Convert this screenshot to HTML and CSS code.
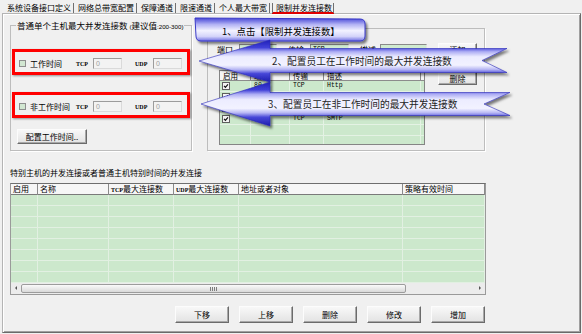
FILE: index.html
```html
<!DOCTYPE html>
<html lang="zh-CN">
<head>
    <meta charset="UTF-8">
    <meta name="viewport" content="width=device-width, initial-scale=1.0">
    <title>限制并发连接数</title>
    <link rel="stylesheet" href="styles.css">
</head>
<body>
    <div class="tabs">
        <span class="tab">系统设备接口定义</span>
        <span class="tab">网络总带宽配置</span>
        <span class="tab">保障通道</span>
        <span class="tab">限速通道</span>
        <span class="tab">个人最大带宽</span>
        <span class="tab active">限制并发连接数</span>
    </div>

    <div class="panel">
        <div class="top-row">
            <div class="group group-left">
                <div class="group-title">普通单个主机最大并发连接数 <span class="tiny">(</span>建议值<span class="tiny">:200-300)</span></div>

                <div class="limit-row mark">
                    <span class="check"></span>
                    <span class="limit-name">工作时间</span>
                    <span class="proto">TCP</span>
                    <span class="num-input">0</span>
                    <span class="proto udp">UDP</span>
                    <span class="num-input">0</span>
                </div>

                <div class="limit-row mark">
                    <span class="check"></span>
                    <span class="limit-name">非工作时间</span>
                    <span class="proto">TCP</span>
                    <span class="num-input">0</span>
                    <span class="proto udp">UDP</span>
                    <span class="num-input">0</span>
                </div>

                <button class="btn btn-config">配置工作时间..</button>
            </div>

            <div class="group group-right">
                <div class="port-fields">
                    <span class="field-label">端口</span>
                    <span class="field-input w-port"></span>
                    <span class="field-label gap">传输</span>
                    <span class="field-input w-proto">TCP</span>
                    <span class="field-label gap">描述</span>
                    <span class="field-input w-desc"></span>
                    <button class="btn btn-side">添加</button>
                </div>
                <div class="port-body">
                    <div class="port-grid">
                        <div class="pg-head">
                            <span>启用</span><span>端口</span><span>传输</span><span>描述</span><span></span>
                        </div>
                        <div class="pg-row">
                            <span><i class="tick"><svg viewBox="0 0 7 7"><path d="M1.2 3.4 L2.8 5 L5.8 1.6" /></svg></i></span><span>80</span><span>TCP</span><span>Http</span><span></span>
                        </div>
                        <div class="pg-row">
                            <span><i class="tick"><svg viewBox="0 0 7 7"><path d="M1.2 3.4 L2.8 5 L5.8 1.6" /></svg></i></span><span></span><span></span><span></span><span></span>
                        </div>
                        <div class="pg-row">
                            <span><i class="tick"><svg viewBox="0 0 7 7"><path d="M1.2 3.4 L2.8 5 L5.8 1.6" /></svg></i></span><span></span><span></span><span></span><span></span>
                        </div>
                        <div class="pg-row">
                            <span><i class="tick"><svg viewBox="0 0 7 7"><path d="M1.2 3.4 L2.8 5 L5.8 1.6" /></svg></i></span><span>25</span><span>TCP</span><span>SMTP</span><span></span>
                        </div>
                        <div class="pg-row"><span></span><span></span><span></span><span></span><span></span></div>
                        <div class="pg-row"><span></span><span></span><span></span><span></span><span></span></div>
                    </div>
                    <button class="btn btn-side btn-del">删除</button>
                </div>
            </div>
        </div>

        <div class="special-label">特别主机的并发连接或者普通主机特别时间的并发连接</div>

        <div class="list">
            <div class="host-head">
                <span>启用</span>
                <span>名称</span>
                <span><b class="latin">TCP</b>最大连接数</span>
                <span><b class="latin">UDP</b>最大连接数</span>
                <span>地址或者对象</span>
                <span>策略有效时间</span>
            </div>
            <div class="host-row"><span></span><span></span><span></span><span></span><span></span><span></span></div>
            <div class="host-row"><span></span><span></span><span></span><span></span><span></span><span></span></div>
            <div class="host-row"><span></span><span></span><span></span><span></span><span></span><span></span></div>
            <div class="host-row"><span></span><span></span><span></span><span></span><span></span><span></span></div>
            <div class="host-row"><span></span><span></span><span></span><span></span><span></span><span></span></div>
            <div class="host-row"><span></span><span></span><span></span><span></span><span></span><span></span></div>
            <div class="host-row"><span></span><span></span><span></span><span></span><span></span><span></span></div>
            <div class="host-row"><span></span><span></span><span></span><span></span><span></span><span></span></div>
            <div class="hscroll">
                <span class="sb-arrow left"></span>
                <span class="sb-thumb"><i class="grip"></i></span>
                <span class="sb-track"></span>
                <span class="sb-arrow right"></span>
            </div>
        </div>

        <div class="actions">
            <button class="btn btn-act">下移</button>
            <button class="btn btn-act">上移</button>
            <button class="btn btn-act">删除</button>
            <button class="btn btn-act">修改</button>
            <button class="btn btn-act">增加</button>
        </div>
    </div>

    <!-- annotation callouts drawn over the dialog -->
    <svg class="notes" width="582" height="334" viewBox="0 0 582 334">
        <defs>
            <linearGradient id="arrowFill" x1="0" y1="0" x2="0" y2="1">
                <stop offset="0" stop-color="#2020b8"/>
                <stop offset="0.18" stop-color="#4040d8"/>
                <stop offset="0.28" stop-color="#aeaef4"/>
                <stop offset="0.4" stop-color="#ececff"/>
                <stop offset="0.6" stop-color="#f2f2ff"/>
                <stop offset="0.7" stop-color="#b8b8f4"/>
                <stop offset="0.8" stop-color="#4848d8"/>
                <stop offset="1" stop-color="#1c1cac"/>
            </linearGradient>
            <linearGradient id="boxFill" x1="0" y1="0" x2="0" y2="1">
                <stop offset="0" stop-color="#4444d6"/>
                <stop offset="0.28" stop-color="#b2b2f4"/>
                <stop offset="0.55" stop-color="#f2f2ff"/>
                <stop offset="0.8" stop-color="#d4d4fa"/>
                <stop offset="1" stop-color="#7070e2"/>
            </linearGradient>
            <filter id="shade" x="-10%" y="-20%" width="130%" height="160%">
                <feDropShadow dx="2" dy="2.5" stdDeviation="1.3" flood-color="#000" flood-opacity="0.5"/>
            </filter>
        </defs>

        <path class="bubble" d="M195 18 L360 19 Q365 19 365 24 L365 36 Q365 41 360 41 L201 41 Q196 41 196 36 Z"/>
        <text class="note-text small" x="222" y="31">1、点击【限制并发连接数】</text>

        <polygon class="arrow" points="199,61 270,40 270,48.5 507,48.5 482,60.5 507,72.5 270,72.5 270,82"/>
        <text class="note-text" x="272" y="61">2、配置员工在工作时间的最大并发连接数</text>

        <polygon class="arrow" points="201,104 270,82 270,92.5 510,92.5 484,104 510,115.5 270,115.5 270,126"/>
        <text class="note-text" x="268" y="104">3、配置员工在非工作时间的最大并发连接数</text>
    </svg>
</body>
</html>
```

FILE: styles.css
```css
* {
    box-sizing: border-box;
}
body {
    margin: 0;
    width: 582px;
    height: 334px;
    position: relative;
    overflow: hidden;
    background: #f0f0f0;
    font-family: "Noto Sans CJK SC", "Liberation Sans", sans-serif;
    font-size: 8px;
    line-height: 10px;
    color: #000;
}

/* tab strip */
.tabs {
    display: flex;
    height: 13px;
    padding: 3px 0 0 3px;
}
.tab {
    height: 10px;
    padding: 0 2px 0 4px;
    border-right: 1px solid #707070;
    white-space: nowrap;
}
.tab.active {
    margin-left: 2px;
    padding: 0 1px 0 3px;
    border-left: 1px solid #707070;
    box-shadow: inset 0 -1px 0 #e00000, 0 1px 0 #e00000;
}

.panel {
    margin-left: 2px;
    width: 579px;
    height: 320px;
    border: 1px solid;
    border-color: #b4b4b4 #6a6a6a #6a6a6a #b4b4b4;
    box-shadow: inset 1px 1px 0 #fff, inset -1px -1px 0 #a0a0a0;
}

.top-row {
    display: flex;
    align-items: flex-start;
    margin-top: 11px;
    padding-left: 7px;
}
.group {
    border: 1px solid #bdbdbd;
    box-shadow: 1px 1px 0 #fff;
}
.group-left {
    width: 182px;
    height: 126px;
}
.group-right {
    width: 278px;
    height: 123px;
    margin: 3px 0 0 15px;
    padding-left: 9px;
}
.group-title {
    width: max-content;
    margin: -6px 0 0 5px;
    padding: 0 1px;
    background: #f0f0f0;
    font-size: 8.5px;
    line-height: 10px;
}
.tiny {
    font-family: "Liberation Sans", sans-serif;
    font-size: 6.2px;
}

/* red highlight rows */
.mark {
    border: 3px solid #f00;
    box-shadow: 1px 1px 2px rgba(0, 0, 0, 0.4);
}
.limit-row {
    display: flex;
    align-items: center;
    width: 178px;
    height: 26px;
    margin: 17px 0 0 1px;
    padding: 3px 0 0 4px;
}
.check {
    width: 7px;
    height: 7px;
    margin-right: 4px;
    border: 1px solid #8f8f8f;
    background: #d2e7d2;
}
.limit-name {
    width: 46px;
}
.proto {
    width: 17px;
    font-family: "Liberation Serif", serif;
    font-weight: bold;
    font-size: 6px;
}
.proto.udp {
    width: 18px;
    margin-left: 13px;
}
.num-input {
    width: 29px;
    height: 11px;
    padding-left: 2px;
    border: 1px solid;
    border-color: #9c9c9c #dadada #dadada #9c9c9c;
    background: #f3f3f3;
    color: #a0a0a0;
    font-family: "Liberation Sans", sans-serif;
    font-size: 7px;
    line-height: 9px;
}

.btn {
    padding: 0;
    font-family: inherit;
    font-size: 8px;
    line-height: 10px;
    color: #000;
    background: linear-gradient(#f8f8f8, #e3e3e3);
    border: 1px solid;
    border-color: #fcfcfc #6b6b6b #6b6b6b #fcfcfc;
    box-shadow: inset -1px -1px 0 #a8a8a8;
}
.btn-config {
    display: block;
    width: 70px;
    height: 15px;
    margin: 11px 0 0 6px;
}

/* port list on the right */
.port-fields {
    display: flex;
    align-items: center;
    height: 13px;
    margin-top: 14px;
}
.field-label {
    width: 22px;
}
.field-label.gap {
    width: 20px;
    margin-left: 11px;
}
.field-label.gap:nth-of-type(3) {
    width: 22px;
}
.field-input {
    height: 12px;
    padding-left: 2px;
    border: 1px solid;
    border-color: #8a8a8a #e4e4e4 #e4e4e4 #8a8a8a;
    background: #d0ebd0;
    font-family: "Liberation Mono", monospace;
    font-size: 6.5px;
    line-height: 10px;
}
.w-port { width: 38px; }
.w-proto { width: 39px; }
.w-desc { width: 47px; }
.btn-side {
    width: 39px;
    height: 13px;
    margin-left: 11px;
}
.port-body {
    display: flex;
    align-items: flex-start;
    margin-top: 14px;
}
.btn-del {
    margin: 2px 0 0 13px;
}
.port-grid {
    width: 206px;
    height: 75px;
    margin-left: 2px;
    overflow: hidden;
    border: 1px solid #858585;
    background: #cce8cc;
}
.pg-head,
.pg-row {
    display: grid;
    grid-template-columns: 31px 39px 34px 97px 1fr;
}
.pg-head {
    height: 10px;
    background: #f5f5f5;
    border-bottom: 1px solid #8c8c8c;
    font-size: 7.5px;
    line-height: 9px;
}
.pg-head span {
    padding-left: 3px;
    border-right: 1px solid #8c8c8c;
}
.pg-row {
    height: 11px;
}
.pg-row span {
    padding-left: 3px;
    border-right: 1px solid #e4f2e4;
    border-bottom: 1px solid #e4f2e4;
    font-family: "Liberation Mono", monospace;
    font-size: 6.5px;
    line-height: 10px;
}
.pg-row span:first-child {
    padding: 1px 0 0 2px;
}
.pg-head span:last-child,
.pg-row span:last-child {
    border-right: none;
}
.tick {
    display: block;
    width: 8px;
    height: 8px;
    border: 1px solid #5e5e5e;
    background: #f4f4f4;
}
.tick svg {
    display: block;
    width: 6px;
    height: 6px;
    fill: none;
    stroke: #111;
    stroke-width: 1.4;
}

/* lower host list */
.special-label {
    margin: 17px 0 0 7px;
}
.list {
    width: 476px;
    height: 112px;
    margin: 5px 0 0 7px;
    border: 1px solid #9a9a9a;
    border-top-color: #6e6e6e;
    background: #cce8cc;
}
.host-head,
.host-row {
    display: grid;
    grid-template-columns: 27px 71px 65px 65px 164px 82px;
}
.host-head {
    height: 11px;
    background: #f6f6f6;
    border-bottom: 1px solid #7a7a7a;
}
.host-head span {
    padding-left: 2px;
    border-right: 1px solid #8a8a8a;
    white-space: nowrap;
}
.latin {
    font-family: "Liberation Serif", serif;
    font-size: 6px;
}
.host-row {
    height: 11px;
}
.host-row span {
    border-right: 1px solid #e2f0e2;
    border-bottom: 1px solid #e2f0e2;
}
.hscroll {
    display: flex;
    height: 11px;
    background: #ececec;
}
.sb-arrow {
    position: relative;
    width: 10px;
}
.sb-arrow::after {
    content: "";
    position: absolute;
    top: 3px;
    left: 4px;
    border: 2.5px solid transparent;
}
.sb-arrow.left::after {
    border-right-color: #555;
    border-left-width: 0;
}
.sb-arrow.right::after {
    border-left-color: #555;
    border-right-width: 0;
}
.sb-thumb {
    display: flex;
    align-items: center;
    justify-content: center;
    width: 385px;
    height: 9px;
    margin-top: 1px;
    border: 1px solid #9c9c9c;
    border-radius: 2px;
    background: linear-gradient(#fafafa, #d9d9d9);
}
.grip {
    width: 7px;
    height: 4px;
    background: repeating-linear-gradient(90deg, #7e7e7e 0 1px, transparent 1px 2px);
}
.sb-track {
    flex: 1;
}

.actions {
    display: flex;
    gap: 10px;
    margin-top: 11px;
    padding-left: 172px;
}
.btn-act {
    width: 54px;
    height: 17px;
}

/* overlay annotations */
.notes {
    position: absolute;
    top: 0;
    left: 0;
    pointer-events: none;
}
.bubble {
    fill: url(#boxFill);
    stroke: #3a3ac8;
    stroke-width: 1;
    filter: url(#shade);
}
.arrow {
    fill: url(#arrowFill);
    stroke: #2a2ab8;
    stroke-width: 0.6;
    filter: url(#shade);
}
.note-text {
    font-family: "Noto Sans CJK SC", sans-serif;
    font-size: 9.7px;
    fill: #1e1e1e;
    dominant-baseline: central;
}
.note-text.small {
    font-size: 9.4px;
    fill: #000;
}
```
